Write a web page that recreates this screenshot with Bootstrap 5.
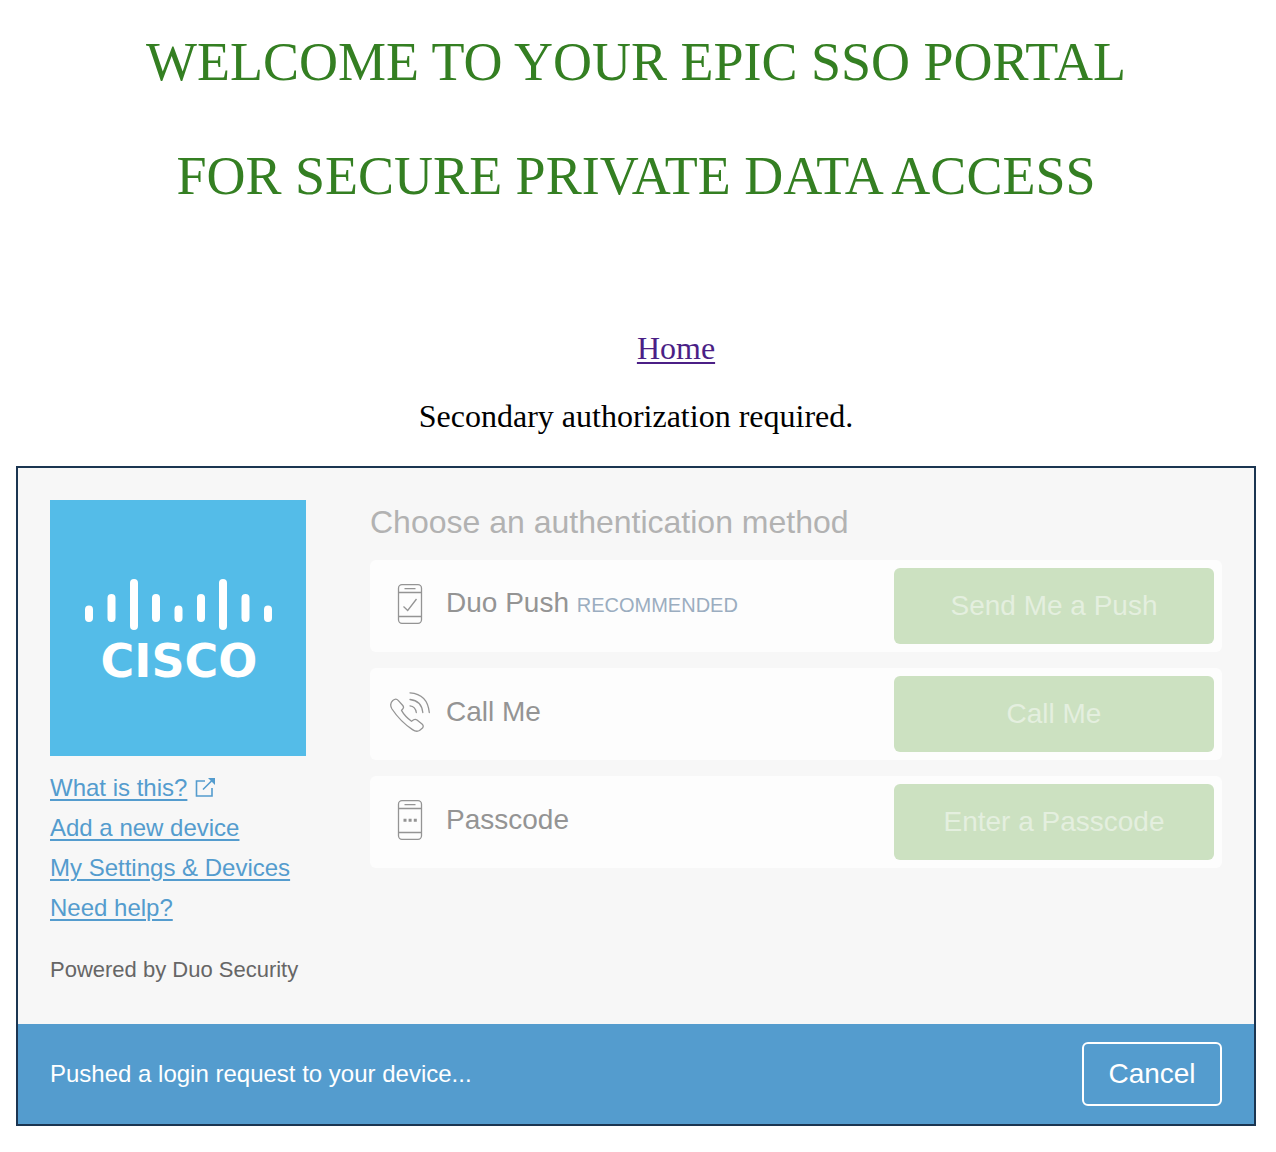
<!DOCTYPE html>
<html lang="en">
<head>
<meta charset="utf-8">
<meta name="viewport" content="width=device-width, initial-scale=1">
<title>EPIC SSO Portal</title>
<link href="https://cdn.jsdelivr.net/npm/bootstrap@5.3.0/dist/css/bootstrap.min.css" rel="stylesheet">
<style>
  body { font-family: "Liberation Serif", "Times New Roman", serif; font-size: 32px; line-height: 36px; color: #000; background: #fff; }
  .portal-page { padding: 32px 20px 24px 16px; }
  .portal-title { font-size: 54px; line-height: 60px; font-weight: 400; color: #347f22; margin-bottom: 124px; }
  .title-line { display: block; margin-bottom: 54px; }
  .home-nav { padding-left: 80px; margin-bottom: 32px; }
  .home-nav a { color: #4b1f86; text-underline-offset: 3px; text-decoration-thickness: 2px; }
  .portal-note { margin-bottom: 32px; }
  .duo-frame { border: 2px solid #1b3551; background: #f7f7f7; font-family: "Liberation Sans", Arial, sans-serif; }
  .duo-body { gap: 64px; padding: 32px 32px 34px; }
  .duo-side { width: 256px; }
  .duo-links { margin: 12px 0 22px; font-size: 24px; line-height: 40px; white-space: nowrap; }
  .duo-links a { color: #549cce; text-underline-offset: 3px; text-decoration-thickness: 2px; }
  .duo-powered { font-size: 22px; line-height: 40px; color: #666; white-space: nowrap; }
  .duo-heading { font-size: 32px; line-height: 44px; font-weight: 400; color: #b2b2b2; margin-bottom: 16px; }
  .method-row { background: #fdfdfd; border-radius: 6px; padding: 8px 8px 8px 20px; }
  .method-name { font-size: 28px; line-height: 40px; color: #949494; }
  .method-tag { font-size: 20px; color: #9badc0; }
  .method-btn, .method-btn:disabled { width: 320px; height: 76px; font-size: 28px; color: #e4efdf; background: #cce1c1; border: 0; border-radius: 6px; opacity: 1; }
  .duo-status { background: #549cce; color: #fff; font-size: 24px; padding: 18px 32px; }
  .cancel-btn { width: 140px; height: 64px; font-size: 28px; color: #fff; border: 2px solid #fff; border-radius: 6px; }
</style>
</head>
<body>
<div class="portal-page">
  <header class="text-center">
    <h1 class="portal-title mt-0">
      <span class="title-line">WELCOME TO YOUR EPIC SSO PORTAL</span>
      <span class="d-block">FOR SECURE PRIVATE DATA ACCESS</span>
    </h1>
    <nav class="home-nav"><a href="#">Home</a></nav>
    <p class="portal-note">Secondary authorization required.</p>
  </header>

  <main class="duo-frame">
    <div class="duo-body d-flex">
      <aside class="duo-side flex-shrink-0">
        <svg class="d-block" width="256" height="256" viewBox="0 0 256 256" role="img" aria-label="Cisco">
          <rect width="256" height="256" fill="#54bce8"/>
          <g stroke="#fff" stroke-width="8" stroke-linecap="round">
            <path d="M39 109.500V118M61.500 98V118M84 83V126M106 98V118M128.500 109.500V118M151 98V118M173 83V126M195.500 98V118M218 109.500V118"/>
          </g>
          <text x="129" y="177" text-anchor="middle" fill="#fff" font-family="DejaVu Sans, sans-serif" font-weight="700" font-size="46">CISCO</text>
        </svg>
        <ul class="duo-links list-unstyled">
          <li class="d-flex align-items-center gap-2"><a href="#">What is this?</a>
            <svg width="20" height="20" viewBox="0 0 20 20" fill="none" stroke="#549cce" stroke-width="1.600" aria-hidden="true"><path d="M10 3H1.500V18H17V10M8 11.500L17 2.500"/><path d="M13 0H20V7Z" fill="#549cce" stroke="none"/></svg></li>
          <li><a href="#">Add a new device</a></li>
          <li><a href="#">My Settings &amp; Devices</a></li>
          <li><a href="#">Need help?</a></li>
        </ul>
        <div class="duo-powered">Powered by Duo Security</div>
      </aside>

      <section class="flex-grow-1">
        <h2 class="duo-heading">Choose an authentication method</h2>
        <div class="d-flex flex-column gap-3">
          <div class="method-row d-flex align-items-center justify-content-between">
            <div class="d-flex align-items-center gap-3 pb-1">
              <svg width="40" height="40" viewBox="0 0 40 40" fill="none" stroke="#949494" stroke-width="1.300" aria-hidden="true"><rect x="8.500" y=".7" width="23" height="38.600" rx="3.500"/><path d="M8.500 8.500H31.500M8.500 32.500H31.500M14.500 4.600H25.500M13.500 22.500L17.700 26.500L26.500 15"/></svg>
              <div class="method-name">Duo Push <span class="method-tag">RECOMMENDED</span></div>
            </div>
            <button type="button" class="btn method-btn" disabled>Send Me a Push</button>
          </div>
          <div class="method-row d-flex align-items-center justify-content-between">
            <div class="d-flex align-items-center gap-3 pb-1">
              <svg width="40" height="40" viewBox="0 0 40 40" fill="none" stroke="#949494" stroke-width="1.300" stroke-linecap="round" stroke-linejoin="round" aria-hidden="true"><path d="M2.800 8.500L4.400 7.500Q6.500 6.500 8.400 8.600L12.800 13.500Q14.300 15.500 12.700 17L11.500 18.400C13.500 22 17 26 21.500 29.300L23.700 27.800Q25.300 26.700 27 28L32.300 32.300Q34 34 32.500 36L29.500 38.500Q26.500 40.300 22.500 37.600C14 32 7 24.500 2 17Q-1 12 2.800 8.500Z"/><path d="M20 13.800Q25.500 14.500 26.300 20.500M20 7.500Q31.500 8.500 32.800 20.500M20 .8Q37.500 2 39.300 20.500"/></svg>
              <div class="method-name">Call Me</div>
            </div>
            <button type="button" class="btn method-btn" disabled>Call Me</button>
          </div>
          <div class="method-row d-flex align-items-center justify-content-between">
            <div class="d-flex align-items-center gap-3 pb-1">
              <svg width="40" height="40" viewBox="0 0 40 40" fill="none" stroke="#949494" stroke-width="1.300" aria-hidden="true"><rect x="8.500" y=".7" width="23" height="38.600" rx="3.500"/><path d="M8.500 8.500H31.500M8.500 32.500H31.500M14.500 4.600H25.500"/><path d="M13.500 20.300H16.500M18.600 20.300H21.600M23.800 20.300H26.800" stroke-width="3"/></svg>
              <div class="method-name">Passcode</div>
            </div>
            <button type="button" class="btn method-btn" disabled>Enter a Passcode</button>
          </div>
        </div>
      </section>
    </div>
    <div class="duo-status d-flex align-items-center justify-content-between">
      <div role="status">Pushed a login request to your device...</div>
      <button type="button" class="btn cancel-btn">Cancel</button>
    </div>
  </main>
</div>
<script src="https://cdn.jsdelivr.net/npm/bootstrap@5.3.0/dist/js/bootstrap.bundle.min.js"></script>
</body>
</html>
